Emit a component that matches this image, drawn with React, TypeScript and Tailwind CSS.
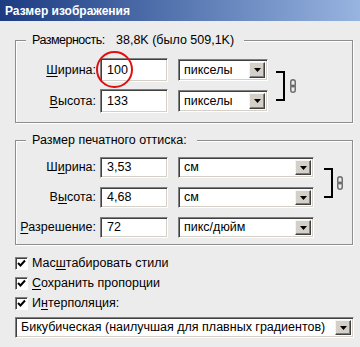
import React from "react";

const sunken =
  "bg-white border border-t-[#808080] border-l-[#808080] border-r-white border-b-white shadow-[inset_1px_1px_0_#404040,inset_-1px_-1px_0_#d4d0c8]";

function Arrow() {
  return (
    <div className="w-[16px] h-full bg-[#d4d0c8] border border-t-[#f4f4f4] border-l-[#f4f4f4] border-r-[#404040] border-b-[#404040] shadow-[inset_-1px_-1px_0_#808080] flex items-center justify-center">
      <svg width="7" height="4" viewBox="0 0 7 4">
        <path d="M0 0 H7 L3.5 4 Z" fill="#000" />
      </svg>
    </div>
  );
}

function Select({ w, h, text }: { w: string; h: string; text: string }) {
  return (
    <div className={`${w} ${h} ${sunken} flex items-stretch p-[2px]`}>
      <div className="flex-1 flex items-center pl-[3px] leading-none whitespace-nowrap overflow-hidden">{text}</div>
      <Arrow />
    </div>
  );
}

function Input({ h, value }: { h: string; value: string }) {
  return (
    <div className={`w-[68px] ${h} ${sunken} flex items-center pl-[6px] leading-none`}>{value}</div>
  );
}

function Link() {
  return (
    <svg width="6" height="14" viewBox="0 0 6 14">
      <rect x="0.75" y="0.75" width="4.5" height="7" rx="2.25" fill="none" stroke="#6c6c6c" strokeWidth="1.5" />
      <rect x="0.75" y="6.25" width="4.5" height="7" rx="2.25" fill="none" stroke="#6c6c6c" strokeWidth="1.5" />
    </svg>
  );
}

function Check({ children }: { children: React.ReactNode }) {
  return (
    <div className="h-[20px] flex items-center">
      <div className="w-[13px] h-[13px] bg-white border border-t-[#808080] border-l-[#808080] border-r-white border-b-white shadow-[inset_1px_1px_0_#404040] flex items-center justify-center">
        <svg width="9" height="9" viewBox="0 0 9 9">
          <path d="M1 4 L3.5 6.5 L8 1.5" fill="none" stroke="#000" strokeWidth="2" />
        </svg>
      </div>
      <span className="ml-[4px] leading-none">{children}</span>
    </div>
  );
}

const groupBox =
  "relative w-[338px] border border-[#8d8d8d] shadow-[inset_1px_1px_0_#fff,1px_1px_0_#fff]";

export default function App() {
  return (
    <div className="w-[360px] h-[347px] bg-[#ececec] overflow-hidden relative text-[12.5px] text-black font-['Liberation_Sans',Arial,sans-serif]">
      <div className="h-[21px] bg-gradient-to-r from-[#1c3b82] to-[#98b4e0] flex items-center pl-[5px] text-white font-bold text-[12px]">
        Размер изображения
      </div>
      <div className="pl-[15px]">
        {/* Group 1 */}
        <div className={`${groupBox} h-[83px] mt-[19px]`}>
          <div className="absolute left-[10px] -top-[10px] pl-[6px] pr-[10px] bg-[#ececec] leading-[18px] flex whitespace-nowrap">
            <span className="w-[84px] tracking-[-0.5px]">Размерность:</span>
            <span>38,8K (было 509,1K)</span>
          </div>
          <div className="flex items-center pt-[17px]">
            <div className="flex flex-col gap-[7px]">
              <div className="flex items-center">
                <div className="w-[80px] text-right">
                  <u className="underline-offset-2">Ш</u>ирина:
                </div>
                <div className="ml-[4px]">
                  <Input h="h-[24px]" value="100" />
                </div>
                <div className="ml-[10px]">
                  <Select w="w-[90px]" h="h-[22px]" text="пикселы" />
                </div>
              </div>
              <div className="flex items-center">
                <div className="w-[80px] text-right">
                  <u className="underline-offset-2">В</u>ысота:
                </div>
                <div className="ml-[4px]">
                  <Input h="h-[24px]" value="133" />
                </div>
                <div className="ml-[10px]">
                  <Select w="w-[90px]" h="h-[22px]" text="пикселы" />
                </div>
              </div>
            </div>
            <div className="ml-[8px] w-[9px] h-[30px] border-y-2 border-r-2 border-black" />
            <div className="ml-[5px]">
              <Link />
            </div>
          </div>
        </div>

        {/* Group 2 */}
        <div className={`${groupBox} h-[105px] mt-[17px]`}>
          <div className="absolute left-[10px] -top-[10px] pl-[6px] pr-[10px] bg-[#ececec] leading-[18px] whitespace-nowrap">
            Размер печатного оттиска:
          </div>
          <div className="flex flex-col gap-[9px] pt-[16px]">
            <div className="flex items-center">
              <div className="flex flex-col gap-[9px]">
                <div className="flex items-center">
                  <div className="w-[80px] text-right">
                    Ш<u className="underline-offset-2">и</u>рина:
                  </div>
                  <div className="ml-[4px]">
                    <Input h="h-[21px]" value="3,53" />
                  </div>
                  <div className="ml-[10px]">
                    <Select w="w-[136px]" h="h-[21px]" text="см" />
                  </div>
                </div>
                <div className="flex items-center">
                  <div className="w-[80px] text-right">
                    В<u className="underline-offset-2">ы</u>сота:
                  </div>
                  <div className="ml-[4px]">
                    <Input h="h-[21px]" value="4,68" />
                  </div>
                  <div className="ml-[10px]">
                    <Select w="w-[136px]" h="h-[21px]" text="см" />
                  </div>
                </div>
              </div>
              <div className="ml-[10px] w-[9px] h-[30px] border-y-2 border-r-2 border-black" />
              <div className="ml-[4px]">
                <Link />
              </div>
            </div>
            <div className="flex items-center">
              <div className="w-[80px] text-right">
                <u className="underline-offset-2">Р</u>азрешение:
              </div>
              <div className="ml-[4px]">
                <Input h="h-[21px]" value="72" />
              </div>
              <div className="ml-[10px]">
                <Select w="w-[136px]" h="h-[21px]" text="пикс/дюйм" />
              </div>
            </div>
          </div>
        </div>

        {/* Checkboxes */}
        <div className="mt-[8px] flex flex-col">
          <Check>
            Мас<u className="underline-offset-2">ш</u>табировать стили
          </Check>
          <Check>
            <u className="underline-offset-2">С</u>охранить пропорции
          </Check>
          <Check>
            И<u className="underline-offset-2">н</u>терполяция:
          </Check>
        </div>

        <div className="mt-[4px]">
          <Select w="w-[339px]" h="h-[21px]" text="Бикубическая (наилучшая для плавных градиентов)" />
        </div>
      </div>

      {/* red annotation circle */}
      <div className="absolute left-[96px] top-[51px] w-[37px] h-[37px] rounded-full border-2 border-[#e01010]" />
    </div>
  );
}
